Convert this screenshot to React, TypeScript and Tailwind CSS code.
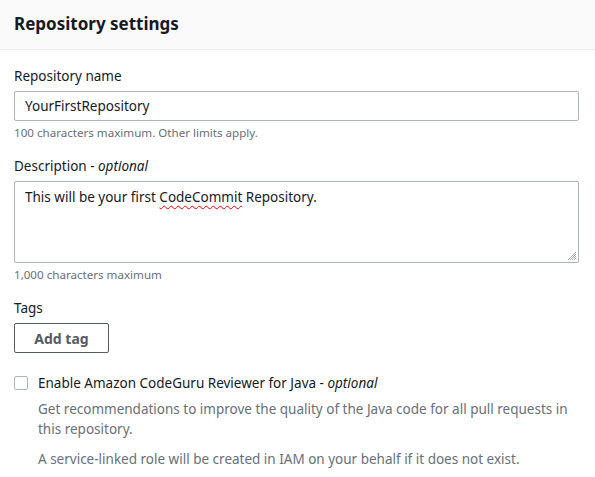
export default function App() {
  const font = { fontFamily: '"Noto Sans", "Open Sans", Arial, sans-serif' };
  return (
    <div className="w-[595px] h-[477px] bg-white text-[#16191f] overflow-hidden" style={font}>
      <div className="h-[50px] bg-[#fafafa] border-b border-[#eaeded] px-[14px] flex items-center">
        <h2 className="text-[17px] font-bold leading-[22px] pb-[2px]">Repository settings</h2>
      </div>
      <div className="px-[14px] pr-[16px]">
        <div className="mt-[15px] text-[13.5px] leading-[22px]">Repository name</div>
        <div className="mt-[4px] h-[30px] border border-[#aab7b8] rounded-[2px] px-[10px] flex items-center text-[13.5px]">
          YourFirstRepository
        </div>
        <div className="mt-[4px] text-[11.6px] leading-[16px] text-[#687078]">100 characters maximum. Other limits apply.</div>
        <div className="mt-[14px] text-[13.5px] leading-[22px]">
          Description - <i>optional</i>
        </div>
        <div className="mt-[4px] h-[82px] border border-[#aab7b8] rounded-[2px] px-[10px] pt-[4px] text-[13.5px] leading-[22px] relative">
          This will be your first{" "}
          <span className="underline decoration-wavy decoration-[#e00] decoration-1 underline-offset-[3px]">CodeCommit</span>{" "}
          Repository.
          <svg className="absolute right-[1px] bottom-[1px]" width="10" height="10" viewBox="0 0 10 10">
            <path d="M9 1L1 9M9 3L3 9M9 5L5 9M9 7L7 9" stroke="#999" strokeWidth="0.8" />
          </svg>
        </div>
        <div className="mt-[4px] text-[11.6px] leading-[16px] text-[#687078]">1,000 characters maximum</div>
        <div className="mt-[14px] text-[13.5px] leading-[22px]">Tags</div>
        <div className="mt-[4px]">
          <button className="w-[95px] h-[30px] border border-[#545b64] rounded-[2px] text-[14px] font-bold text-[#545b64] flex items-center justify-center">
            Add tag
          </button>
        </div>
        <div className="mt-[20px] flex items-center text-[13.5px] leading-[20px]">
          <span className="w-[14px] h-[14px] border border-[#aab7b8] rounded-[2px] mr-[10px] shrink-0" />
          <span>
            Enable Amazon CodeGuru Reviewer for Java - <i>optional</i>
          </span>
        </div>
        <div className="pl-[24px] text-[13.5px] leading-[20px] text-[#687078]">
          <p className="mt-[6px]">Get recommendations to improve the quality of the Java code for all pull requests in this repository.</p>
          <p className="mt-[10px]">A service-linked role will be created in IAM on your behalf if it does not exist.</p>
        </div>
      </div>
    </div>
  );
}
